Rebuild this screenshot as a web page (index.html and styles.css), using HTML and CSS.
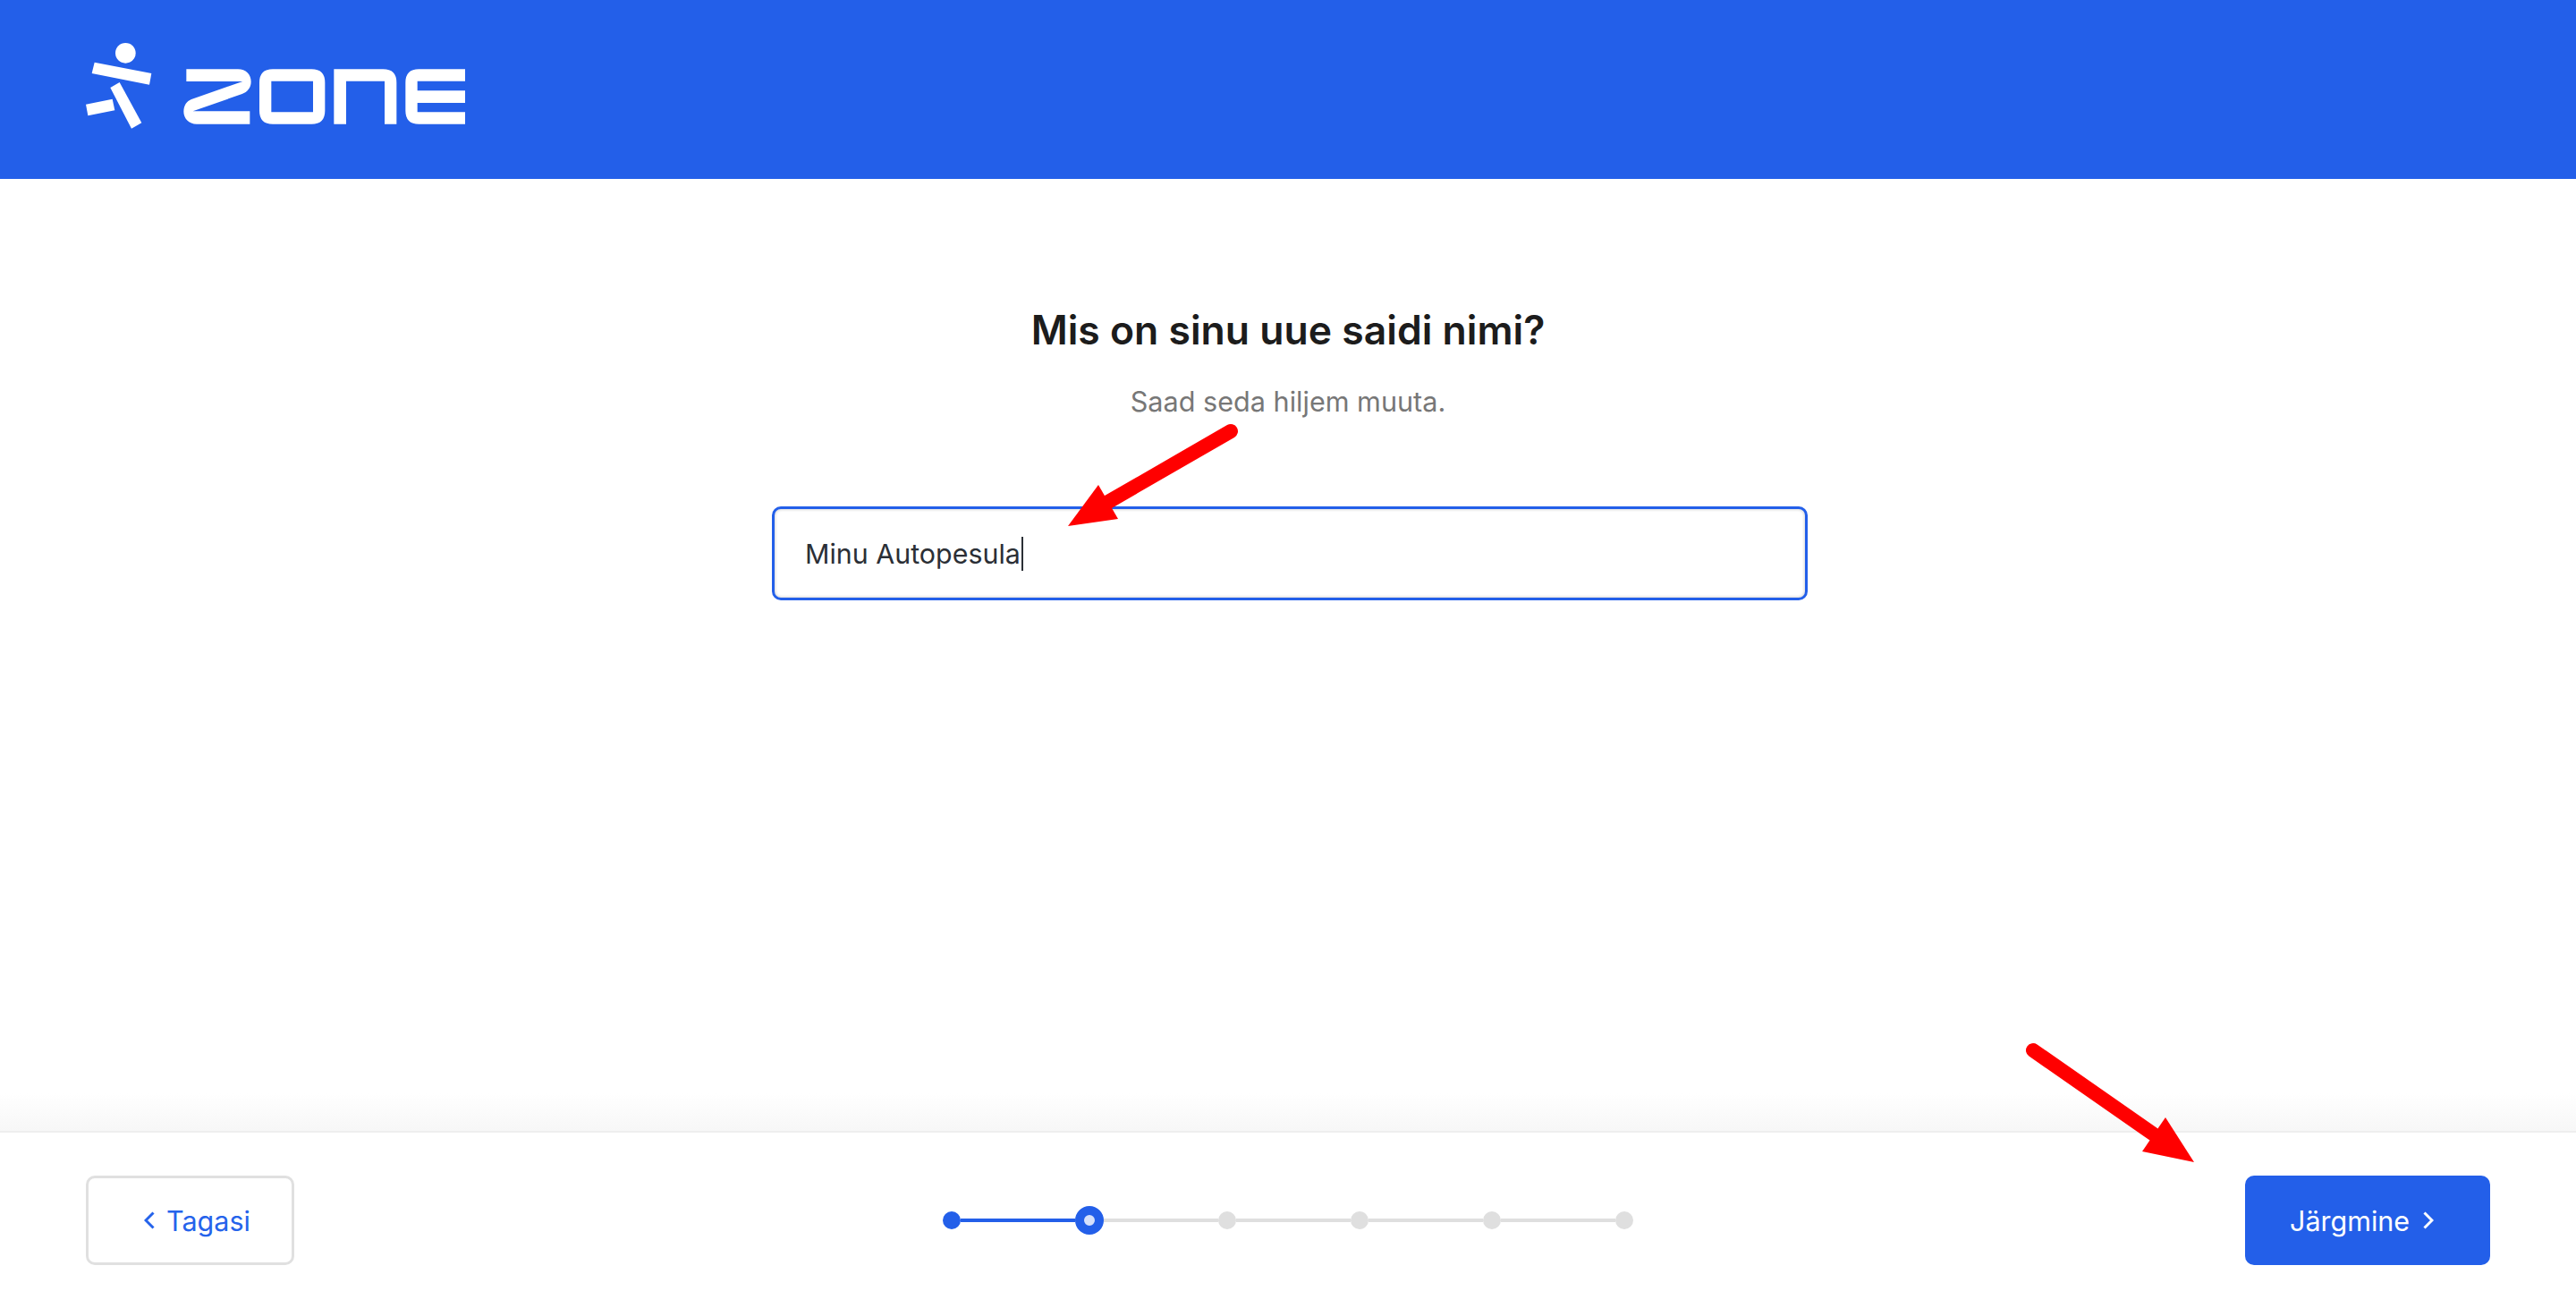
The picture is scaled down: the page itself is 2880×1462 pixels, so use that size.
FILE: index.html
```html
<!DOCTYPE html>
<html lang="et">
<head>
<meta charset="utf-8">
<title>Zone</title>
<link rel="stylesheet" href="styles.css">
</head>
<body>
<div class="page">
  <header class="topbar">
    <svg class="logo" viewBox="0 0 1500 570" width="500" height="190" aria-label="Zone">
      <g fill="#fff">
        <circle cx="241" cy="118" r="34"/>
        <polygon points="137,149 328,186 321,224 128,186"/>
        <polygon points="190,234 221,216 295,352 261,371"/>
        <polygon points="108,290 197,272 205,310 115,328"/>
        <path d="M445 172H618C645 172 662 190 662 214C662 234 650 249 632 255L467 313H658V356H480C453 356 436 336 436 314C436 294 446 279 462 273L634 213H445Z"/>
        <path fill-rule="evenodd" d="M735 172H865Q910 172 910 217V311Q910 356 865 356H735Q690 356 690 311V217Q690 172 735 172ZM730 212V316H870V212Z"/>
        <path d="M940 356V172H1105Q1150 172 1150 217V356H1110V212H981V356Z"/>
        <path d="M1380 172H1225Q1180 172 1180 217V311Q1180 356 1225 356H1380V316H1220V285H1380V244H1220V212H1380Z"/>
      </g>
    </svg>
  </header>
  <main class="content">
    <h1 class="title">Mis on sinu uue saidi nimi?</h1>
    <p class="subtitle">Saad seda hiljem muuta.</p>
    <div class="field"><span class="value">Minu Autopesula</span><span class="caret"></span></div>
  </main>
  <footer class="footer">
    <button class="btn btn-back">
      <svg class="chev" viewBox="0 0 12 20" width="12" height="20"><path d="M10.500 1.500 2 10l8.500 8.500"/></svg>
      <span>Tagasi</span>
    </button>
    <div class="stepper">
      <span class="dot done"></span><span class="line done"></span>
      <span class="dot current"></span><span class="line"></span>
      <span class="dot"></span><span class="line"></span>
      <span class="dot"></span><span class="line"></span>
      <span class="dot"></span><span class="line"></span>
      <span class="dot"></span>
    </div>
    <button class="btn btn-next">
      <span>Järgmine</span>
      <svg class="chev" viewBox="0 0 12 20" width="12" height="20"><path d="M1.500 1.500 10 10l-8.500 8.500"/></svg>
    </button>
  </footer>
  <svg class="arrows" viewBox="0 0 2880 1462" width="2880" height="1462">
    <g fill="#f00" stroke="none">
      <line x1="1376" y1="482" x2="1239" y2="561" stroke="#f00" stroke-width="16" stroke-linecap="round"/>
      <polygon points="1194,588 1228,542 1250,580"/>
      <line x1="2273" y1="1174" x2="2408" y2="1268" stroke="#f00" stroke-width="16" stroke-linecap="round"/>
      <polygon points="2453,1299 2421,1249 2395,1287"/>
    </g>
  </svg>
</div>
</body>
</html>
```
FILE: styles.css
```css
* { box-sizing: border-box; }
html, body { margin: 0; height: 100%; }
body { font-family: Inter, "Liberation Sans", sans-serif; background: #fff; color: #1c1c1c; }
.page { position: relative; display: flex; flex-direction: column; height: 1462px; overflow: hidden; }
.topbar { height: 200px; flex: none; background: #235fe9; padding: 20px 0 0 60px; }
.logo { display: block; }
.content { flex: 1; display: flex; flex-direction: column; align-items: center; padding-top: 139px; background: linear-gradient(to bottom, #fff calc(100% - 42px), #f7f7f7 100%); }
.title { margin: 0; font-size: 44.5px; line-height: 60px; font-weight: 600; color: #1c1c1c; }
.subtitle { margin: 30px 0 0; font-size: 30.6px; line-height: 40px; color: #777; }
.field { display: flex; align-items: center; margin: 97px 0 0 4px; width: 1158px; height: 105px; padding-left: 34px; border: 3px solid #235fe9; border-radius: 10px; box-shadow: inset 0 0 3px 1px #d8d8d8; font-size: 30.4px; color: #2b2f36; }
.caret { width: 2px; height: 38px; margin-left: 1px; background: #2b2f36; }
.footer { flex: none; height: 198px; display: grid; grid-template-columns: 1fr auto 1fr; align-items: center; padding: 0 96px; border-top: 2px solid #eee; background: #fff; }
.btn { display: flex; align-items: center; height: 100px; font-family: inherit; font-size: 30.5px; border-radius: 10px; }
.btn-back { width: 233px; padding: 0 0 0 62px; gap: 13px; background: #fff; color: #2563eb; border: 3px solid #e0e0e0; }
.btn-next { width: 274px; padding: 0 0 0 50px; gap: 15px; justify-self: end; background: #235fe9; color: #fff; border: 0; }
.chev { flex: none; fill: none; stroke: currentColor; stroke-width: 3; }
.stepper { display: flex; align-items: center; }
.dot { width: 20px; height: 20px; border-radius: 50%; background: #dfdfdf; }
.dot.done { background: #235fe9; }
.dot.current { width: 32px; height: 32px; background: #d6e0fb; border: 10px solid #235fe9; }
.line { width: 128px; height: 4px; background: #dfdfdf; }
.line.done { background: #235fe9; }
.arrows { position: absolute; inset: 0; pointer-events: none; }
```
